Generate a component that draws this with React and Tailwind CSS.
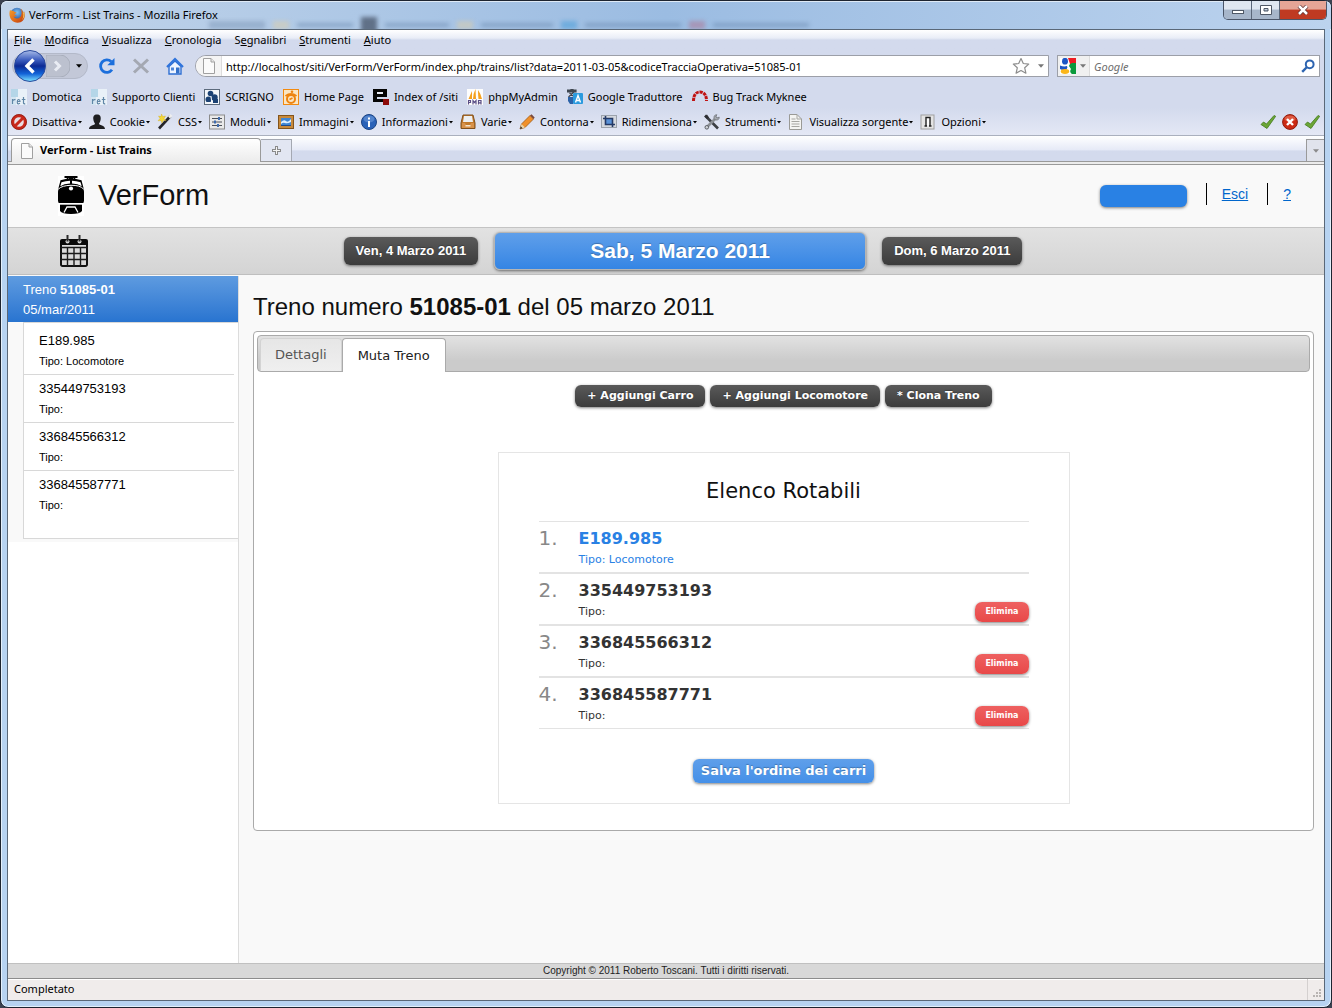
import React from "react";

const Svg = ({ w = 16, h = 16, vb, children, className = "" }) => (
  <svg width={w} height={h} viewBox={vb || `0 0 ${w} ${h}`} className={`shrink-0 ${className}`} aria-hidden="true">
    {children}
  </svg>
);

/* ---------- window icons ---------- */

const FirefoxIcon = () => (
  <Svg>
    <defs>
      <radialGradient id="ff-globe" cx="50%" cy="35%" r="60%">
        <stop offset="0" stopColor="#7fc4f5" />
        <stop offset="1" stopColor="#1c4b9c" />
      </radialGradient>
      <linearGradient id="ff-fox" x1="0" y1="0" x2="1" y2="1">
        <stop offset="0" stopColor="#f0a030" />
        <stop offset="0.5" stopColor="#e4701a" />
        <stop offset="1" stopColor="#b83a10" />
      </linearGradient>
    </defs>
    <circle cx="8" cy="7.5" r="6.8" fill="url(#ff-globe)" />
    <path d="M1 3C0 6 .2 10 2.5 13c3 3.500 8.500 3.700 11.500.5C16 11 16.200 7 15 4c-.2 1-.3 1.600-.8 2.200C14 4 13 2.500 11.500 1.500c.8 1.500 1.300 3 1 5.500-.3 3-2.500 4.800-5 4.500-1.500-.2-2.500-1-3-2 1.200.4 2.300 0 3.200-.8-.8-.4-1.900-.6-2.300-1.500.6-.6 1.600-.6 2.200-1.400C6.500 5 5 5.200 4.500 3.800 3 3.500 2 3.800 1 3z" fill="url(#ff-fox)" />
    <path d="M15 4.500c.8 3 .4 6.500-2 8.700 1.200-2.500 1.700-5 1.200-7z" fill="#f9d65c" />
  </Svg>
);

const BackIcon = () => (
  <Svg w={32} h={32}>
    <defs>
      <linearGradient id="back-fill" x1="0" y1="0" x2="0" y2="1">
        <stop offset="0" stopColor="#a9bce8" />
        <stop offset="0.3" stopColor="#3e5fc0" />
        <stop offset="0.5" stopColor="#0c2a94" />
        <stop offset="0.75" stopColor="#1263d8" />
        <stop offset="1" stopColor="#7fe4ff" />
      </linearGradient>
    </defs>
    <circle cx="16" cy="16" r="15.500" fill="url(#back-fill)" stroke="#2a4a9c" />
    <path d="M19.500 9.500 13 16l6.500 6.500" fill="none" stroke="#fff" strokeWidth="3.400" />
  </Svg>
);

const ForwardIcon = () => (
  <Svg w={24} h={22}>
    <path d="M0 0H14a10 10 0 0 1 10 11A10 10 0 0 1 14 22H0z" fill="#bcc1cf" stroke="#a8aebc" />
    <path d="M9 6.500 13.500 11 9 15.500" fill="none" stroke="#e9ecf4" strokeWidth="3" />
  </Svg>
);

const ReloadIcon = () => (
  <Svg w={18} h={18}>
    <path d="M14 12.800A6.300 6.300 0 1 1 13.200 4.500" fill="none" stroke="#1c6fdc" strokeWidth="2.800" />
    <path d="M16.500 1v7.200H9.300z" fill="#1c6fdc" />
  </Svg>
);

const StopIcon = () => (
  <Svg w={18} h={18}>
    <path d="M2 2.500 16 15.500M16 2.500 2 15.500" stroke="#a4a8b2" strokeWidth="3" />
  </Svg>
);

const HomeIcon = () => (
  <Svg w={18} h={18}>
    <path d="M3 9.500 9 4l6 5.500V17H3z" fill="#eef4ff" stroke="#2f6fd2" strokeWidth="1.400" />
    <path d="M1 10 9 2l8 8" fill="none" stroke="#2f74dc" strokeWidth="2.200" />
    <rect x="5" y="10.500" width="3" height="3" fill="#4c84d8" />
    <rect x="10" y="10.500" width="3.500" height="6" fill="#3470c8" />
  </Svg>
);

const PageIcon = () => (
  <Svg w={14} h={16}>
    <path d="M1.500.5h7.500l3.500 3.500v11.500h-11z" fill="#fbfbfb" stroke="#a0a0a0" />
    <path d="M9 .5V4h3.500" fill="#e8e8e8" stroke="#a0a0a0" />
  </Svg>
);

const StarIcon = () => (
  <Svg w={18} h={18}>
    <path d="m9 1.500 2.300 5 5.400.6-4 3.700 1.200 5.400L9 13.500l-4.900 2.700 1.200-5.400-4-3.700 5.400-.6z" fill="#fdfdfd" stroke="#8d8d8d" strokeWidth="1.200" strokeLinejoin="round" />
  </Svg>
);

const Caret = ({ className = "text-[#777]" }) => (
  <Svg w={6} h={4} vb="0 0 7 4" className={className}>
    <path d="M0 0h7L3.500 4z" fill="currentColor" />
  </Svg>
);

const GoogleIcon = () => (
  <Svg>
    <rect width="16" height="16" fill="#fff" />
    <path d="M8 0h8v6H10z" fill="#ee1c23" />
    <path d="M16 5v11h-4q-3-2-1-5l-2-3q0-2 3-3z" fill="#0a9a3c" />
    <ellipse cx="5" cy="3.200" rx="3" ry="3.400" fill="#1d55c4" />
    <path d="M0 7.500q4 1.500 7 .5 1 1-.5 3.500-4 1-6.500-.5z" fill="#1d55c4" />
    <ellipse cx="5" cy="13.500" rx="4.200" ry="2.400" fill="#fbb61a" />
  </Svg>
);

const SearchIcon = () => (
  <Svg w={14} h={14}>
    <circle cx="8.700" cy="5.300" r="3.900" fill="none" stroke="#2d64b0" strokeWidth="2" />
    <path d="M6 8 1.200 12.800" stroke="#2d64b0" strokeWidth="2.400" />
  </Svg>
);

/* ---------- bookmark icons ---------- */

const RetIcon = () => (
  <Svg>
    <rect width="16" height="16" fill="#e9f1f8" />
    <rect width="7" height="8" fill="#b4d6e8" />
    <rect y="8" width="5" height="8" fill="#d3e5f1" />
    <path d="M1.500 10v5M1.500 12q1.300-2 3-1.300M6.500 12.500h2.500q0-2-1.300-2T6.300 13t1.400 1.700L9 14.200M12.500 8v6q.3 1.200 1.700.6M10.800 10.500h3.600" fill="none" stroke="#5f86a6" strokeWidth="1.200" />
  </Svg>
);

const ScrignoIcon = () => (
  <Svg>
    <rect x=".5" y=".5" width="15" height="15" fill="#f4f7fa" stroke="#5c6a7c" />
    <circle cx="6.500" cy="4.500" r="2.800" fill="#1c4274" />
    <circle cx="4.500" cy="10.500" r="3" fill="#1c4274" />
    <circle cx="10.500" cy="8.500" r="3.200" fill="#1c4274" />
    <path d="M9 10h5v4H9z" fill="#1c4274" />
    <path d="M7 7.500 8 15M3 13.500h4" stroke="#f4f7fa" />
  </Svg>
);

const HomePageIcon = () => (
  <Svg>
    <rect width="16" height="16" fill="#f28a10" />
    <rect x="1" y="1" width="14" height="14" fill="#fbe6c4" />
    <path d="M2.500 7q5.500-4 11 0" fill="none" stroke="#ee8410" strokeWidth="1.800" />
    <circle cx="8" cy="10" r="4" fill="none" stroke="#ee8410" strokeWidth="2" />
    <path d="M6.500 10.500 9.500 9" stroke="#ee8410" strokeWidth="1.600" />
    <circle cx="9" cy="2.800" r="1.300" fill="#ee8410" />
  </Svg>
);

const IndexIcon = () => (
  <Svg>
    <path d="M0 0h14v8H4v2h10v3H0z" fill="#050505" />
    <path d="M4 3h6v2H4z" fill="#e8ebf5" />
    <rect x="10" y="10" width="6" height="6" fill="#8c0a0a" />
  </Svg>
);

const PmaIcon = () => (
  <Svg>
    <rect width="16" height="16" fill="#fdfdfd" />
    <path d="M5 2 1.500 10H5zM8.500 0Q6 5 6 10h3zM11 1q0 5 .5 9H15q-1-5-4-9z" fill="#f5a01e" />
    <path d="M1.500 15.500v-4h2v2h-2M6 15.500v-4l1.500 2L9 11.500v4M11.500 15.500v-4h2.500v4M11.500 13.800H14" fill="none" stroke="#5b4f86" strokeWidth="1.200" />
  </Svg>
);

const TranslateIcon = () => (
  <Svg>
    <path d="M0 1h9v2H0zM4 0h2v2H4zM1.500 8 7 3M2.500 4l5 4" fill="#3f4650" stroke="#3f4650" strokeWidth="1.200" />
    <path d="M1 8h5v7H3L1 12z" fill="#2b62a8" />
    <rect x="6" y="4" width="10" height="11" rx="1" fill="#2b9ade" />
    <path d="M8.500 13.500 11 6.500l2.500 7M9.500 11.500h3" fill="none" stroke="#fff" strokeWidth="1.400" />
  </Svg>
);

const BugIcon = () => (
  <Svg>
    <path d="M1.500 12C1.500 6 4 3 8 3s6.500 3 6.500 9" fill="none" stroke="#c01414" strokeWidth="3" strokeDasharray="3.200 .8" />
  </Svg>
);

/* ---------- developer toolbar icons ---------- */

const DisableIcon = () => (
  <Svg>
    <circle cx="8" cy="8" r="6.300" fill="#e9dfe4" stroke="#c8281a" strokeWidth="3" />
    <path d="M3.800 12.200 12.200 3.800" stroke="#c8281a" strokeWidth="3" />
    <circle cx="8" cy="8" r="7.500" fill="none" stroke="#8c1a10" strokeWidth=".8" />
  </Svg>
);
const CookieIcon = () => (
  <Svg>
    <path d="M8 .5c3 0 4 2 3.700 4.500-.2 2-1 3.500-1.700 4.500 0 2 6 1.500 6 5.500H0c0-4 6-3.500 6-5.500C5.300 8.500 4.500 7 4.300 5 4 2.500 5 .5 8 .5z" fill="#1e1e20" />
  </Svg>
);
const WandIcon = () => (
  <Svg>
    <path d="M2 14.500 13.500 2" stroke="#26262a" strokeWidth="2.600" />
    <path d="M12 3.500 14.500 1" stroke="#efefef" strokeWidth="2.600" />
    <path d="m4.500 0 1.200 2.600L8.500 2 7 4.500l2 2-2.800-.2L5 9 4 6.500l-3 .3L3 4.500 1.500 2l2.500.6z" fill="#f5d838" stroke="#d0ac20" strokeWidth=".4" />
  </Svg>
);
const FormsIcon = () => (
  <Svg>
    <rect x=".5" y="1" width="15" height="14" fill="#e9e9e9" stroke="#8b8b8b" />
    <path d="M3 4.500h10M3 8h10M3 11.500h10" stroke="#4a4f58" />
    <path d="M9 3h2v3H9zM5 6.500h2v3H5zM8 10h2v3H8z" fill="#3f6cae" />
  </Svg>
);
const ImagesIcon = () => (
  <Svg>
    <rect x=".5" y="1.500" width="15" height="13" fill="#c88a3c" stroke="#83541c" />
    <rect x="3" y="4" width="10" height="8" fill="#3f86d4" />
    <path d="M3 8q3-3 5-1t5-2v3q-4 2-6 1t-4 1z" fill="#dff0ff" />
    <path d="M3 11h10v1H3z" fill="#1e4c8c" />
  </Svg>
);
const InfoIcon = () => (
  <Svg>
    <circle cx="8" cy="8" r="7.500" fill="#2a62b8" stroke="#1b4484" />
    <ellipse cx="8" cy="5" rx="5.500" ry="3.500" fill="#79a6e2" opacity=".5" />
    <path d="M7 7h2v6H7zM7 3.500h2v2H7z" fill="#fff" />
  </Svg>
);
const TrayIcon = () => (
  <Svg>
    <path d="M3 1h10l2 8v5.500H1V9z" fill="#c27a2c" stroke="#80501c" />
    <path d="M4 2h8l1 6H3z" fill="#eceff2" />
    <path d="M2 9h3l1 2h4l1-2h3v5H2z" fill="#d8924a" />
    <rect x="5.500" y="11" width="5" height="1.500" fill="#f4e4cc" />
  </Svg>
);
const PencilIcon = () => (
  <Svg>
    <path d="M1 15l1.500-5L11 1.500 14.500 5 6 13.500z" fill="#f0902a" stroke="#a05a14" strokeWidth=".8" />
    <path d="M11 1.500 12.500.3l3.200 3.200L14.500 5z" fill="#7b4a3c" />
    <path d="M1 15l1.500-5L6 13.500z" fill="#e8d2a8" />
    <path d="M1 15l.8-2.500 1.700 1.700z" fill="#222" />
  </Svg>
);
const ResizeIcon = () => (
  <Svg>
    <rect x=".5" y="1.500" width="15" height="12" fill="#d4d8de" stroke="#9ba2ac" />
    <rect x="5" y="4" width="6" height="6" fill="#5a92d8" />
    <path d="M4.500 2v8.500H14M2 4.500h9.500V13" fill="none" stroke="#253a66" strokeWidth="1.600" />
  </Svg>
);
const ToolsIcon = () => (
  <Svg>
    <path d="M1 1.500 14 14.500" stroke="#3c3f44" strokeWidth="2.600" />
    <path d="M13 3 2.500 13.500" stroke="#8c9096" strokeWidth="2.600" />
    <path d="M10 4.500C9.500 2 11 .5 13 .8L11.800 2.500l1.500 1.500L15.200 3c.3 2-1.200 3.500-3.700 3z" fill="#a6aab0" stroke="#5a5e64" strokeWidth=".6" />
    <path d="M.5 2.500 3 .5l2 3-2 1.500z" fill="#2c2e32" />
    <circle cx="2.800" cy="13.300" r="1.800" fill="#cfd2d8" stroke="#5a5e64" />
  </Svg>
);
const SourceIcon = () => (
  <Svg>
    <path d="M1.500.5H9L13.500 5v10.500h-12z" fill="#f4f4f2" stroke="#9a9a96" />
    <path d="M9 .5V5h4.500M3.500 5h4M3.500 7.500h8M3.500 10h8M3.500 12.500h8" fill="none" stroke="#a6a6a2" />
  </Svg>
);
const OptionsIcon = () => (
  <Svg>
    <rect x="1" y="1" width="13" height="14" fill="#e4e4e4" stroke="#a0a0a0" />
    <path d="M6 3.500h4v8H6z" fill="#fff" />
    <path d="M6 12V3.500h4V12M4.500 12h2.500M9 12h2.500" fill="none" stroke="#222" strokeWidth="1.400" />
  </Svg>
);
const CheckIcon = () => (
  <Svg>
    <path d="M1 10.500 3.500 8l3 2L14 1.500l1.700.8L7 14.500z" fill="#6ba636" stroke="#437a1c" strokeWidth=".8" />
  </Svg>
);
const ErrorIcon = () => (
  <Svg>
    <circle cx="8" cy="8" r="7.400" fill="#cc2a14" stroke="#8e1a0c" />
    <ellipse cx="8" cy="4.800" rx="5.500" ry="3.200" fill="#f08a70" opacity=".5" />
    <path d="m5 5 6 6M11 5l-6 6" stroke="#fff" strokeWidth="2.400" />
  </Svg>
);

/* ---------- application icons ---------- */

const TrainLogo = () => (
  <Svg w={26} h={40}>
    <rect width="26" height="40" fill="#fff" />
    <path d="M6.500 1h13M8.500 0l1.500 3M17.500 0 16 3M11 2.200h4" stroke="#000" strokeWidth="1.800" fill="none" />
    <path d="M2.500 4.200Q13 1.500 23.500 4.200L25.500 12V27H.5V12z" fill="#000" />
    <path d="M3.500 6.200Q7.500 4.900 12 4.800V7.600Q6 8 2.300 10.200zM22.500 6.200Q18.500 4.900 14 4.800V7.600q6 .4 9.700 2.600z" fill="#fff" />
    <path d="M.5 13Q4 9.500 13 9.300t12.500 3.700" fill="none" stroke="#fff" />
    <path d="M0 15.500q0-2 2.500-3h21q2.500 1 2.500 3v9q0 2-2 2H2q-2 0-2-2z" fill="#000" />
    <circle cx="13" cy="12.500" r="2.100" fill="#fff" />
    <path d="M2 28.500h22v6.500q-2 3-11 3T2 35z" fill="#000" />
    <path d="M6 36.500 9 31h8l3 5.500" fill="none" stroke="#fff" strokeWidth="1.300" />
    <path d="M0 27.700h26" stroke="#fff" strokeWidth="1.400" />
  </Svg>
);

const CalendarIcon = () => (
  <Svg w={30} h={32}>
    <path d="M3 4h24a2 2 0 0 1 2 2v4H1V6a2 2 0 0 1 2-2z" fill="#0a0a0a" />
    <path d="M2 10v19.500a1.500 1.500 0 0 0 1.500 1.500h23a1.500 1.500 0 0 0 1.500-1.500V10" fill="none" stroke="#111" strokeWidth="2" />
    <path d="M2 12.500h26M2 18.500h26M2 24.500h26M8.500 12v19M15 12v19M21.500 12v19" stroke="#1a1a1a" strokeWidth="1.400" />
    <circle cx="8.500" cy="6.500" r="2" fill="#d8d8d8" />
    <circle cx="20.500" cy="6.500" r="2" fill="#d8d8d8" />
    <path d="M8.500 0v6.500M20.500 0v6.500" stroke="#2a2a2a" strokeWidth="2" />
  </Svg>
);

/* ---------- data ---------- */

const menus = [
  ["", "F", "ile"],
  ["", "M", "odifica"],
  ["", "V", "isualizza"],
  ["", "C", "ronologia"],
  ["S", "e", "gnalibri"],
  ["", "S", "trumenti"],
  ["", "A", "iuto"],
];

const bookmarks = [
  ["Domotica", RetIcon],
  ["Supporto Clienti", RetIcon],
  ["SCRIGNO", ScrignoIcon],
  ["Home Page", HomePageIcon],
  ["Index of /siti", IndexIcon],
  ["phpMyAdmin", PmaIcon],
  ["Google Traduttore", TranslateIcon],
  ["Bug Track Myknee", BugIcon],
];

const devTools = [
  ["Disattiva", DisableIcon],
  ["Cookie", CookieIcon],
  ["CSS", WandIcon],
  ["Moduli", FormsIcon],
  ["Immagini", ImagesIcon],
  ["Informazioni", InfoIcon],
  ["Varie", TrayIcon],
  ["Contorna", PencilIcon],
  ["Ridimensiona", ResizeIcon],
  ["Strumenti", ToolsIcon],
  ["Visualizza sorgente", SourceIcon],
  ["Opzioni", OptionsIcon],
];

const vehicles = [
  { code: "E189.985", type: "Locomotore", loco: true },
  { code: "335449753193", type: "" },
  { code: "336845566312", type: "" },
  { code: "336845587771", type: "" },
];

/* ---------- window frame ---------- */

function TitleBar() {
  return (
    <div className="relative flex h-7 shrink-0 items-center overflow-hidden rounded-t-md bg-linear-to-r from-[#c3d5ea] via-[#9bbce2] to-[#bcd3ee] pl-2 shadow-[inset_0_1px_0_#dfeaf6]">
      <div aria-hidden="true" className="absolute inset-x-0 bottom-0 flex h-2 items-center gap-2 pl-52 opacity-50 blur-[2px]">
        <i className="h-2 w-14 bg-[#7d96b6]" />
        <i className="h-2 w-4 bg-[#e0cfa6]" />
        <i className="h-1 w-14 bg-[#6484aa]" />
        <i className="h-4 w-4 bg-[#141a2a]" />
        <i className="h-1 w-16 bg-[#6484aa]" />
        <i className="h-2 w-4 bg-[#e0cfa6]" />
        <i className="h-1 w-18 bg-[#6484aa]" />
        <i className="h-2 w-4 bg-[#3f9ad8]" />
        <i className="h-1 w-24 bg-[#6484aa]" />
        <i className="h-2 w-4 bg-[#b0708c]" />
        <i className="h-1 w-24 bg-[#6484aa]" />
      </div>
      <div className="relative flex items-center gap-1">
        <FirefoxIcon />
        <span className="text-black">VerForm - List Trains - Mozilla Firefox</span>
      </div>
      <div className="relative mr-1 ml-auto flex h-[19px] self-start overflow-hidden rounded-b-[5px] border border-t-0 border-[#4a5568]">
        <button aria-label="Riduci a icona" className="flex w-7 items-center justify-center border-r border-[#5b6779] bg-linear-to-b from-[#dfe7f1] from-45% to-[#a7b6ca] to-50%">
          <Svg w={12} h={10}><rect x=".5" y="5.500" width="11" height="3" fill="#fff" stroke="#4f5866" /></Svg>
        </button>
        <button aria-label="Ingrandisci" className="flex w-7 items-center justify-center border-r border-[#5b6779] bg-linear-to-b from-[#dfe7f1] from-45% to-[#a7b6ca] to-50%">
          <Svg w={12} h={10}><path d="M.5.5h11v9H.5zM4 3.500h4v2.500H4z" fillRule="evenodd" fill="#fff" stroke="#4f5866" /></Svg>
        </button>
        <button aria-label="Chiudi" className="flex w-[46px] items-center justify-center bg-linear-to-b from-[#e5a596] from-45% to-[#bf3a22] to-50%">
          <Svg w={12} h={10}><path d="m2 1 8 8M10 1 2 9" stroke="#5c3030" strokeWidth="4" /><path d="m2 1 8 8M10 1 2 9" stroke="#fff" strokeWidth="2.500" /></Svg>
        </button>
      </div>
    </div>
  );
}

function NavBar() {
  return (
    <div className="flex h-8 items-center pr-1 pl-1">
      <div className="flex h-[26px] w-[76px] items-center rounded-full border border-[#b3b9c9] bg-[#c3c8d8] pl-px">
        <button aria-label="Indietro" className="shrink-0"><BackIcon /></button>
        <button aria-label="Avanti"><ForwardIcon /></button>
        <button aria-label="Cronologia recente" className="ml-1.5"><Caret className="text-black" /></button>
      </div>
      <div className="flex items-center gap-4 px-2.5">
        <button aria-label="Ricarica"><ReloadIcon /></button>
        <button aria-label="Ferma"><StopIcon /></button>
        <button aria-label="Pagina iniziale"><HomeIcon /></button>
      </div>
      <div className="mr-2 ml-px flex h-[22px] min-w-0 flex-1 items-center overflow-hidden rounded-l-full border border-[#9c9fa8] bg-white">
        <div className="flex h-full w-[26px] items-center justify-center border-r border-[#dcdcdc] bg-[#f4f4f4]"><PageIcon /></div>
        <input
          aria-label="Indirizzo"
          className="h-full min-w-0 flex-1 bg-transparent pl-1 text-black outline-none"
          defaultValue="http://localhost/siti/VerForm/VerForm/index.php/trains/list?data=2011-03-05&codiceTracciaOperativa=51085-01"
        />
        <button aria-label="Aggiungi segnalibro"><StarIcon /></button>
        <button aria-label="Mostra cronologia" className="mr-1 ml-2"><Caret /></button>
      </div>
      <div className="flex h-[22px] w-[263px] items-center border border-[#9c9fa8] bg-white">
        <button aria-label="Motore di ricerca" className="flex h-full w-8 items-center gap-1 border-r border-[#dcdcdc] bg-[#f0f0f0] pl-0.5">
          <GoogleIcon />
          <Caret />
        </button>
        <input aria-label="Cerca" placeholder="Google" className="h-full min-w-0 flex-1 pl-1 italic outline-none placeholder:text-[#6e6e6e]" />
        <button aria-label="Avvia ricerca" className="mr-1"><SearchIcon /></button>
      </div>
    </div>
  );
}

function BrowserChrome() {
  return (
    <div className="shrink-0 bg-[#d3daed]">
      <nav aria-label="Menu" className="flex h-5 items-center gap-[13px] bg-linear-to-b from-white from-0% via-[#e9edf7] via-40% to-[#d3daed] to-50% pl-1.5">
        {menus.map(([pre, key, post]) => (
          <button key={key + post}>
            {pre}<span className="underline">{key}</span>{post}
          </button>
        ))}
      </nav>
      <NavBar />
      <div className="mt-1 flex h-[22px] items-center gap-2 pl-[3px]">
        {bookmarks.map(([label, Icon]) => (
          <a key={label} href="#" className="flex items-center gap-[5px] pr-px">
            <Icon />
            {label}
          </a>
        ))}
      </div>
      <div className="flex h-[27px] items-center gap-[7px] bg-linear-to-b from-[#d3daed] to-[#e4e8f5] pt-px pr-1 pl-[3px]">
        {devTools.map(([label, Icon]) => (
          <button key={label} className="flex items-center whitespace-nowrap">
            <Icon />
            <span className="mr-px ml-[5px]">{label}</span>
            <Svg w={4} h={3}><path d="M0 0h4L2 2.500z" fill="#000" /></Svg>
          </button>
        ))}
        <div className="ml-auto flex gap-1.5">
          <CheckIcon />
          <ErrorIcon />
          <CheckIcon />
        </div>
      </div>
      <div className="flex h-[27px] items-end border-t border-b border-t-[#aab0be] border-b-[#9a9a9a] bg-linear-to-b from-white from-0% via-[#e6eaf7] via-55% to-[#d3daed] to-60% pl-[3px]">
        <button className="-mb-px flex h-6 w-[250px] items-center gap-1.5 rounded-t-[4px] border border-b-0 border-[#9a9a9a] bg-linear-to-b from-white to-[#ececec] pl-2 font-bold">
          <PageIcon />
          VerForm - List Trains
        </button>
        <button aria-label="Nuova scheda" className="flex h-[22px] w-[31px] items-center justify-center border border-b-0 border-l-0 border-[#a4a8b2] bg-[#e2e6f2]">
          <Svg w={9} h={9}><path d="M4.500 0v9M0 4.500h9" stroke="#8b8b8b" strokeWidth="3" /><path d="M4.500 1v7M1 4.500h7" stroke="#f4f4f4" /></Svg>
        </button>
        <button aria-label="Elenca schede" className="ml-auto flex h-[22px] w-[18px] items-center justify-center border border-r-0 border-b-0 border-[#9a9a9a] bg-[#e0e3ec]">
          <Caret className="text-[#8a8a8a]" />
        </button>
      </div>
      <div className="h-[3px] border-b border-[#9a9a9a] bg-[#ececec]" />
    </div>
  );
}

/* ---------- application ---------- */

const dark = "rounded-md bg-linear-to-b from-[#5a5a5a] to-[#3c3c3c] font-bold text-white shadow-[0_1px_3px_rgba(0,0,0,0.5)] text-shadow-[0_-1px_1px_rgba(0,0,0,0.25)]";

function AppHeader() {
  return (
    <>
      <header className="flex h-[63px] shrink-0 items-center border-b border-[#c4c4c4] pr-[33px] pl-[50px]">
        <TrainLogo />
        <h1 className="mr-auto ml-3.5 text-[29px] text-[#111]">VerForm</h1>
        <span className="h-[22px] w-[87px] rounded-md bg-[#2981e4] shadow-[0_1px_3px_rgba(0,0,0,0.5)]" />
        <nav className="ml-[19px] flex items-center pb-[5px] text-[14px] leading-[22px] text-[#0066cc]">
          <span className="border-l border-black pr-[19px] pl-[15px]"><a href="#" className="underline">Esci</a></span>
          <span className="border-l border-black pl-[15px]"><a href="#" className="underline">?</a></span>
        </nav>
      </header>
      <div className="flex h-[47px] shrink-0 items-center border-b border-[#bfbfbf] bg-linear-to-b from-[#e2e2e2] to-[#d4d4d4] pr-[47px] pl-[51px]">
        <button aria-label="Calendario"><CalendarIcon /></button>
        <div className="flex flex-1 items-center justify-center gap-4">
          <button className={`${dark} h-7 px-3 text-[13px]`}>Ven, 4 Marzo 2011</button>
          <button className="h-[38px] w-[372px] rounded-md border border-[#b5b5b5] bg-linear-to-b from-[#5f9fea] to-[#3485e4] text-[21px] font-bold text-white shadow-[0_1px_3px_rgba(0,0,0,0.5)] text-shadow-[0_-1px_1px_rgba(0,0,0,0.25)]">
            Sab, 5 Marzo 2011
          </button>
          <button className={`${dark} h-7 px-3 text-[13px]`}>Dom, 6 Marzo 2011</button>
        </div>
      </div>
    </>
  );
}

function Sidebar() {
  return (
    <aside className="flex w-[231px] shrink-0 flex-col border-r border-[#dcdcdc] bg-white">
      <div className="bg-[#f9f9f9] pb-[3px]">
        <div className="h-[46px] bg-linear-to-b from-[#5e9be0] to-[#2874d0] pt-1 pl-[15px] text-[13px] leading-5 text-white">
          <p>Treno <b>51085-01</b></p>
          <p>05/mar/2011</p>
        </div>
        <ul className="ml-[15px] border-t border-b border-l border-[#d8d8d8] bg-white pt-1 pr-1 pb-[19px] text-black">
          {vehicles.map((v) => (
            <li key={v.code} className="h-12 border-b border-[#d8d8d8] pt-1 pl-[15px] last:border-b-0">
              <p className="text-[13px] leading-5">{v.code}</p>
              <p className="text-[11px] leading-5">Tipo: {v.type}</p>
            </li>
          ))}
        </ul>
      </div>
    </aside>
  );
}

function RollingStock() {
  return (
    <section className="mx-auto mt-[45px] w-[572px] border border-[#e5e5e5] px-10 pt-6 pb-5">
      <h3 className="text-center text-[21px] leading-7 text-[#111]">Elenco Rotabili</h3>
      <ol className="mt-4">
        {vehicles.map((v, i) => (
          <li key={v.code} className={`flex h-[52px] border-t border-b border-[#e3e3e3] ${v.loco ? "text-[#2981e4]" : "text-[#333]"}`}>
            <span className="w-10 pt-0.5 text-[20px] leading-7 text-[#888]">{i + 1}.</span>
            <div className="flex-1 pt-[7px]">
              <p className="text-[16px] leading-5 font-bold">{v.code}</p>
              <p className="text-[11px] leading-[22px]">Tipo: {v.type}</p>
            </div>
            {!v.loco && (
              <button className="mb-0.5 h-5 self-end rounded-[7px] bg-linear-to-b from-[#ee6060] to-[#e84848] px-2.5 text-[8px] font-bold text-white shadow-[0_1px_3px_rgba(0,0,0,0.5)]">
                Elimina
              </button>
            )}
          </li>
        ))}
      </ol>
      <div className="mt-[30px] text-center">
        <button className="h-6 rounded-md bg-linear-to-b from-[#5f9fea] to-[#4590e8] px-2 text-[13px] font-bold text-white shadow-[0_1px_3px_rgba(0,0,0,0.5)] text-shadow-[0_-1px_1px_rgba(0,0,0,0.25)]">
          Salva l'ordine dei carri
        </button>
      </div>
    </section>
  );
}

function Main() {
  return (
    <main className="min-w-0 flex-1 pt-[15px] pr-2.5 pl-3.5">
      <h2 className="text-[24px] leading-8 text-[#111]">
        Treno numero <b>51085-01</b> del 05 marzo 2011
      </h2>
      <div className="mt-2 rounded-[4px] border border-[#aaa] bg-white px-[3px] pt-[3px] pb-[26px] font-['DejaVu_Sans',sans-serif]">
        <div role="tablist" className="flex h-[37px] items-end rounded-[4px] border border-[#aaa] bg-linear-to-b from-[#e2e2e2] to-[#cbcbcb] to-70% pl-0.5 text-[13px]">
          <button role="tab" aria-selected="false" className="h-[33px] rounded-t-[4px] border border-b-0 border-[#d3d3d3] bg-linear-to-b from-[#e6e6e6] to-[#efefef] px-3.5 text-[#555]">
            Dettagli
          </button>
          <button role="tab" aria-selected="true" className="-mb-px h-[34px] rounded-t-[4px] border border-b-0 border-[#aaa] bg-white px-[15px] text-[#212121]">
            Muta Treno
          </button>
        </div>
        <div className="mt-[13px] flex justify-center gap-[5px] text-[11px]">
          <button className={`${dark} h-[22px] px-3`}>+ Aggiungi Carro</button>
          <button className={`${dark} h-[22px] px-3`}>+ Aggiungi Locomotore</button>
          <button className={`${dark} h-[22px] px-3`}>* Clona Treno</button>
        </div>
        <RollingStock />
      </div>
    </main>
  );
}

export default function App() {
  return (
    <div className="bg-[#3c4250]">
      <div className="flex min-h-screen flex-col rounded-lg border border-[#1d2430] bg-[#b7d3f1] font-['Noto_Sans','Open_Sans',sans-serif] text-[11px] text-black shadow-[inset_0_0_0_1px_#e4f0fb]">
        <TitleBar />
        <div className="mx-1.5 mb-1.5 flex flex-1 flex-col border border-[#5a6878]">
          <BrowserChrome />
          <div className="flex flex-1 flex-col bg-[#f9f9f9] font-['Liberation_Sans',sans-serif]">
            <AppHeader />
            <div className="flex flex-1 pt-px">
              <Sidebar />
              <Main />
            </div>
            <footer className="h-[15px] shrink-0 border-t border-[#c0c0c0] bg-[#d8d8d8] text-center text-[10px] leading-[14px] text-[#222]">
              Copyright © 2011 Roberto Toscani. Tutti i diritti riservati.
            </footer>
          </div>
          <div className="flex h-[22px] shrink-0 items-center border-t border-[#8c8c8c] bg-[#f0eceb] pl-1.5 shadow-[inset_0_1px_0_#fff]">
            <span>Completato</span>
            <span className="ml-auto flex h-full items-end border-l border-[#d4d0cf] pr-0.5 pb-0.5 pl-1">
              <Svg w={10} h={10}>
                <path d="M7 1h2v2H7zM7 4h2v2H7zM7 7h2v2H7zM4 4h2v2H4zM4 7h2v2H4zM1 7h2v2H1z" fill="#b8b4b2" />
              </Svg>
            </span>
          </div>
        </div>
      </div>
    </div>
  );
}
